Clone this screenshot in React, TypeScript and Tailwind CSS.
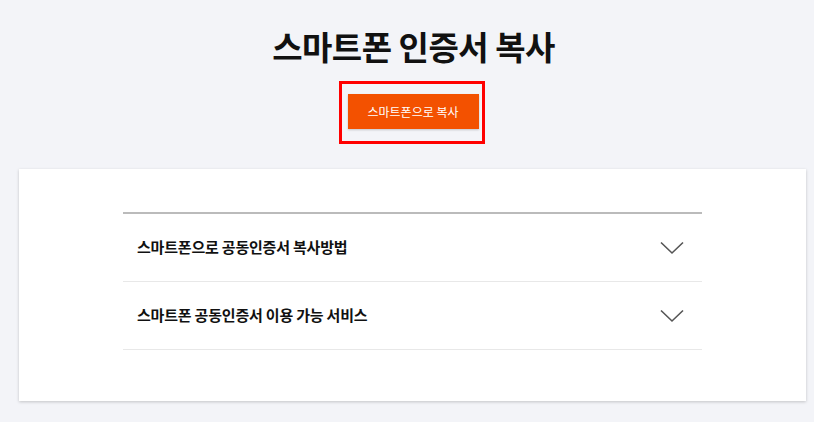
const items = ["스마트폰으로 공동인증서 복사방법", "스마트폰 공동인증서 이용 가능 서비스"];

const Chevron = () => (
  <svg width="24" height="14" viewBox="0 0 24 14" fill="none">
    <path d="M1 1.5 L12 12 L23 1.5" stroke="#555" strokeWidth="1.6" />
  </svg>
);

export default function App() {
  return (
    <div className="min-h-[422px] bg-[#f3f4f8] font-['Noto_Sans_CJK_KR','Noto_Sans',sans-serif] text-[#111]">
      <div className="ml-[19px] w-[787px] flex flex-col items-center">
        <h1 className="mt-[22px] text-[33px] leading-[48px] font-bold tracking-[-0.5px] ml-[2px]">스마트폰 인증서 복사</h1>
        <div className="mt-[11px] mr-[2px] w-[146px] h-[63px] border-[3px] border-[#ff0000] pl-[6px] pt-[10px]">
          <button className="w-[131px] h-[35px] bg-[#f35100] text-white text-[12px] shadow-[0_1px_2px_rgba(0,0,0,0.2)]">
            스마트폰으로 복사
          </button>
        </div>
        <div className="mt-[25px] w-full bg-white shadow-[0_1px_3px_rgba(0,0,0,0.2)] pt-[43px] pb-[51px] flex justify-center">
          <div className="w-[579px] border-t-2 border-[#bbbbbb]">
            {items.map((t) => (
              <div key={t} className="h-[68px] flex items-center justify-between pl-[14px] pr-[18px] border-b border-[#e8e8e8]">
                <span className="text-[15px] font-semibold tracking-[-0.2px]">{t}</span>
                <Chevron />
              </div>
            ))}
          </div>
        </div>
      </div>
    </div>
  );
}
